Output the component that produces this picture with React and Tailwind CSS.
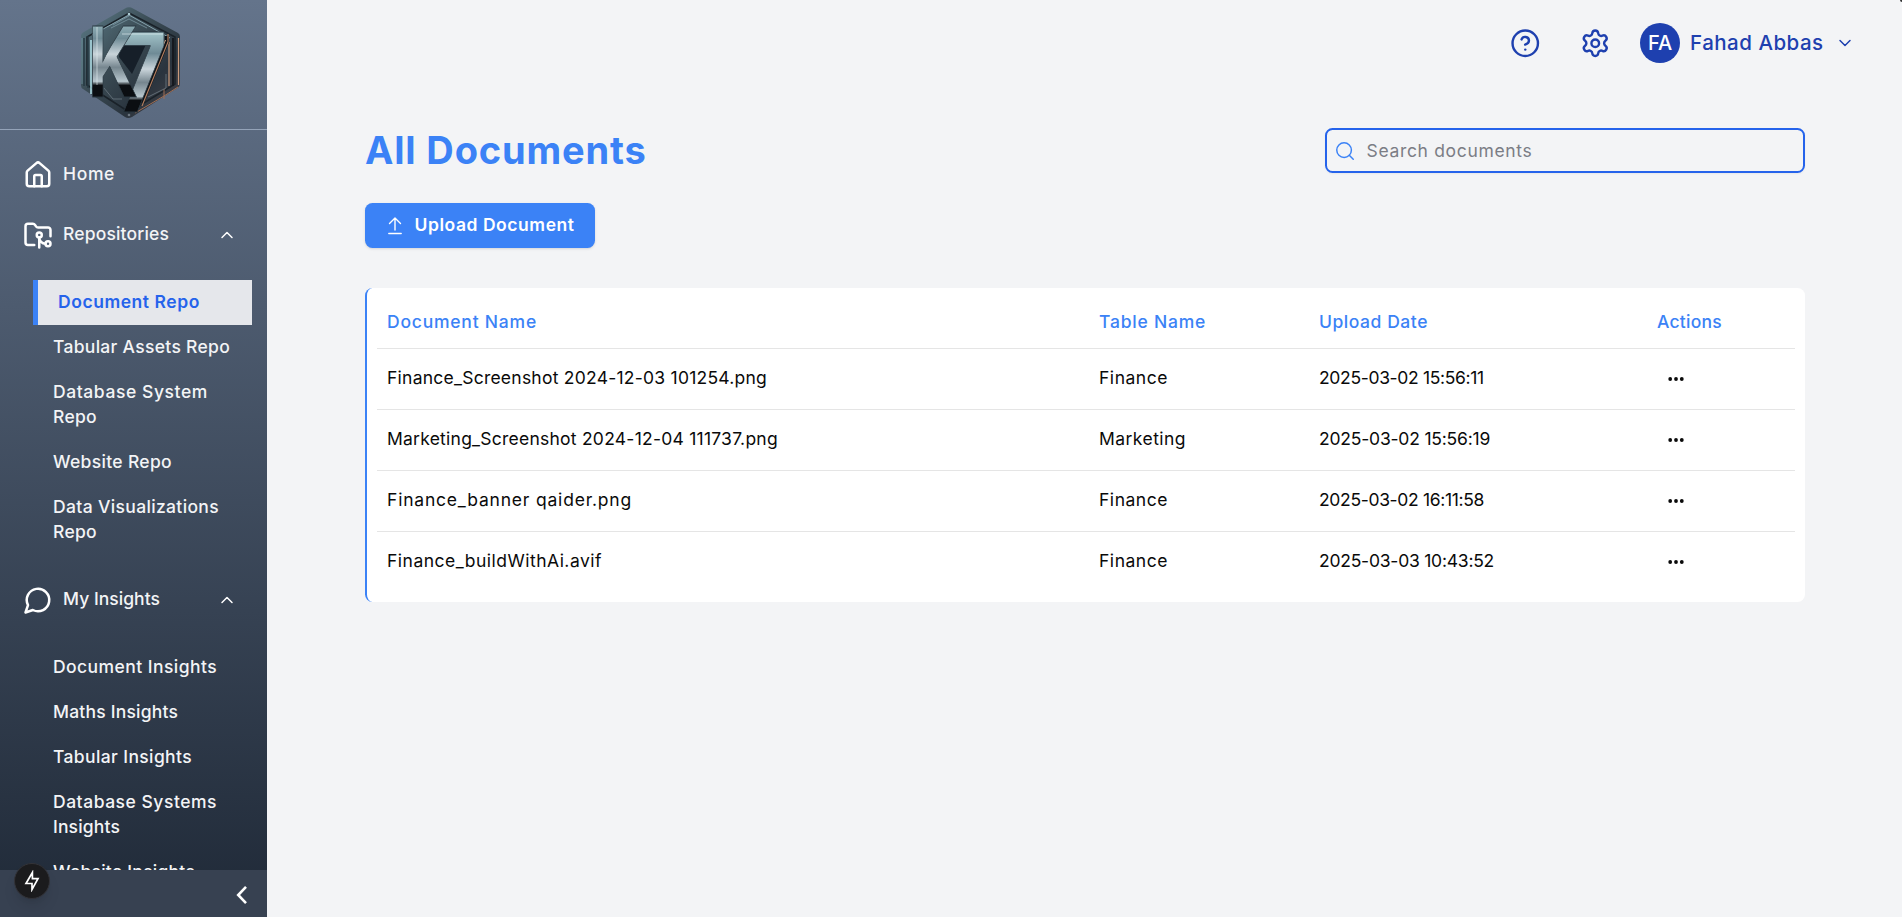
import React from "react";
import { ChevronUp, ChevronDown, House, FolderGit2, CircleHelp, Settings, Search } from "lucide-react";

const repoLinks = [
  [["Tabular Assets Repo", "tracking-[0.3px]"]],
  [["Database System", "tracking-[0.58px]"], ["Repo", "tracking-[0.3px]"]],
  [["Website Repo", "tracking-[0.32px]"]],
  [["Data Visualizations", "tracking-[0.35px]"], ["Repo", "tracking-[0.3px]"]],
];

const insightLinks = [
  [["Document Insights", "tracking-[0.44px]"]],
  [["Maths Insights", "tracking-[0.2px]"]],
  [["Tabular Insights", "tracking-[0.38px]"]],
  [["Database Systems", "tracking-[0.52px]"], ["Insights", "tracking-[0.16px]"]],
  [["Website Insights", "tracking-[0.25px]"]],
];

const rows = [
  {
    name: ["Finance_Screenshot 2024-12-03 101254.png", "tracking-[0.24px]"],
    table: ["Finance", "tracking-[0.53px]"],
    date: ["2025-03-02 15:56:11", "tracking-[-0.33px]"],
  },
  {
    name: ["Marketing_Screenshot 2024-12-04 111737.png", "tracking-[0.24px]"],
    table: ["Marketing", "tracking-[0.45px]"],
    date: ["2025-03-02 15:56:19", "tracking-[-0.2px]"],
  },
  {
    name: ["Finance_banner qaider.png", "tracking-[0.8px]"],
    table: ["Finance", "tracking-[0.53px]"],
    date: ["2025-03-02 16:11:58", "tracking-[-0.33px]"],
  },
  {
    name: ["Finance_buildWithAi.avif", "tracking-[0.49px]"],
    table: ["Finance", "tracking-[0.53px]"],
    date: ["2025-03-03 10:43:52", "tracking-[-0.23px]"],
  },
];

function Logo() {
  return (
    <svg width="106" height="120" viewBox="76 3 106 120" className="block overflow-visible">
      <defs>
        <linearGradient id="plate" x1="0" y1="0" x2="1" y2="1">
          <stop offset="0" stopColor="#5d7d89" />
          <stop offset="0.4" stopColor="#3b4c55" />
          <stop offset="0.7" stopColor="#2a343e" />
          <stop offset="1" stopColor="#4a4448" />
        </linearGradient>
        <linearGradient id="steel" x1="0" y1="-78" x2="0" y2="0" gradientUnits="userSpaceOnUse">
          <stop offset="0" stopColor="#9fc0c6" />
          <stop offset="0.25" stopColor="#6f8b96" />
          <stop offset="0.45" stopColor="#c9d4da" />
          <stop offset="0.62" stopColor="#76868f" />
          <stop offset="0.8" stopColor="#b7c6cd" />
          <stop offset="0.85" stopColor="#0b0e12" />
          <stop offset="1" stopColor="#0b0e12" />
        </linearGradient>
      </defs>
      <path d="M125 8.500q4-2.500 8 0L178 33q2 1 2 3.500V84q0 2-2 3.500L132 117q-4 2-7 0L83 89q-2-1-2-3.500V36q0-2.500 2-3.500Z" fill="url(#plate)" />
      <path d="M129 13 175 37V84L129 112 87 85V37Z" fill="none" stroke="#1a2229" strokeWidth="1.500" />
      <path d="M129 15 170 38M129 15 92 35" fill="none" stroke="#86a3ad" strokeWidth="1" />
      <path d="M111 28 129 19 147 28M113 25 129 16" fill="none" stroke="#7896a1" strokeWidth="0.800" />
      <path d="M84 38V86M88 36V88" stroke="#263a43" strokeWidth="1.500" />
      <path d="M91 40V94" stroke="#b4e4ec" strokeWidth="1.500" />
      <path d="M82 38V84" stroke="#7599a4" strokeWidth="0.800" />
      <path d="M169 42V86M178.500 38V85" stroke="#c99a7b" strokeWidth="1.200" />
      <path d="M173 38V86" stroke="#16191f" strokeWidth="2" />
      <path d="M164 89V99M135 113 164 96 178 87" fill="none" stroke="#a06f55" strokeWidth="1" />
      <path d="M104 88 113 99H122M148 97 166 88V74" fill="none" stroke="#65727b" strokeWidth="0.900" />
      <path d="M120 43 130 36H150L132 74 119 57Z" fill="#161f29" />
      <path d="M167 36V42L142 103" fill="none" stroke="#0d1116" strokeWidth="4" />
      <path d="M168 34V42L142 106" fill="none" stroke="#b07d5f" strokeWidth="1.200" />
      <path d="M165.500 40 139 104" fill="none" stroke="#d9b08f" strokeWidth="1" />
      <g fontFamily="Inter, sans-serif" fontWeight="700">
        <text transform="translate(116 112) scale(0.800 1)" fontSize="110" fill="url(#steel)" stroke="#2b3942" strokeWidth="0.800">7</text>
        <text transform="translate(88 97) scale(0.720 1)" fontSize="97" fill="url(#steel)" stroke="#2b3942" strokeWidth="0.800">K</text>
      </g>
      <path d="M97 27V85M122 34H163" fill="none" stroke="#e3eef1" strokeWidth="0.900" opacity="0.7" />
      <circle cx="129" cy="14" r="1.300" fill="#a9c9d0" />
      <circle cx="129" cy="115" r="1.300" fill="#6b7680" />
    </svg>
  );
}

function SubLink({ lines }) {
  return (
    <li className="pt-[9px] pb-[11px] pl-[20px]">
      {lines.map(([text, tracking]) => (
        <div key={text} className={"whitespace-nowrap leading-[25px] " + tracking}>
          {text}
        </div>
      ))}
    </li>
  );
}

function Sidebar() {
  return (
    <aside className="flex h-full w-[267px] shrink-0 flex-col bg-linear-to-b/srgb from-[#64748b] to-[#1f2937] text-[17.5px] font-medium text-gray-100">
      <div className="flex h-[130px] shrink-0 justify-center border-b border-[#94a3b8] pt-[3px] pr-[9px]">
        <Logo />
      </div>
      <nav className="min-h-0 flex-1 overflow-hidden pt-[22px]">
        <div className="flex h-[45px] items-center pl-[23px]">
          <House size={30} strokeWidth={2} className="text-white" />
          <span className="ml-[10px] tracking-[0.65px]">Home</span>
        </div>
        <div className="mt-[15px] flex h-[45px] items-center pr-[30px] pl-[23px]">
          <FolderGit2 size={30} strokeWidth={2} className="text-white" />
          <span className="ml-[10px] tracking-[0.16px]">Repositories</span>
          <ChevronUp size={20} strokeWidth={1.8} className="ml-auto text-white" />
        </div>
        <ul className="mt-[23px] pr-[15px] pl-[33px]">
          <li className="h-[45px] border-l-[5px] border-[#3b82f6] bg-[#e5e7eb] pl-[20px] leading-[43px] font-semibold tracking-[0.55px] text-[#2563eb]">
            Document Repo
          </li>
          {repoLinks.map((lines) => (
            <SubLink key={lines[0][0]} lines={lines} />
          ))}
        </ul>
        <div className="mt-[22px] flex h-[45px] items-center pr-[30px] pl-[23px]">
          <svg width="30" height="30" viewBox="0 0 24 24" fill="none" stroke="#fff" strokeWidth="2" strokeLinecap="round" strokeLinejoin="round">
            <path d="M7.9 20A9 9 0 1 0 4 16.1L2 22Z" />
          </svg>
          <span className="ml-[10px] tracking-[0.04px]">My Insights</span>
          <ChevronUp size={20} strokeWidth={1.8} className="ml-auto text-white" />
        </div>
        <ul className="mt-[23px] pl-[33px]">
          {insightLinks.map((lines) => (
            <SubLink key={lines[0][0]} lines={lines} />
          ))}
        </ul>
      </nav>
      <div className="flex h-[47px] shrink-0 items-center justify-end bg-[#374151] pt-[2px] pr-[18px]">
        <svg width="14" height="20" viewBox="0 0 14 20" fill="none" stroke="#fff" strokeWidth="2.6">
          <path d="M11 1.800 3.200 10 11 18.200" />
        </svg>
      </div>
    </aside>
  );
}

function Header() {
  return (
    <header className="flex h-[86px] items-center justify-end pr-[47px] text-[#1e40af]">
      <CircleHelp size={30.5} strokeWidth={1.9} />
      <Settings size={30.5} strokeWidth={1.9} className="ml-[39.5px]" />
      <div className="ml-[30px] flex size-[40px] items-center justify-center rounded-full bg-[#1e40af] text-[20px] font-medium text-white">
        FA
      </div>
      <span className="ml-[10px] w-[136px] whitespace-nowrap text-[20.5px] font-medium tracking-[0.5px]">Fahad Abbas</span>
      <ChevronDown size={20} strokeWidth={1.8} className="ml-[9px]" />
    </header>
  );
}

const columns = "grid grid-cols-[712px_220px_338px_1fr]";

function DocumentTable() {
  return (
    <section className="mt-[40px] rounded-[7.5px] border-l-2 border-[#3b82f6] bg-white p-[10px]">
      <div className={columns + " h-[51px] items-center border-b border-[#e5e5e5] pb-px font-medium text-[#3b82f6]"}>
        <div className="pl-[10px] tracking-[0.78px]">Document Name</div>
        <div className="pl-[10px] tracking-[0.78px]">Table Name</div>
        <div className="pl-[10px] tracking-[0.55px]">Upload Date</div>
        <div className="pl-[10px] tracking-[0.24px]">Actions</div>
      </div>
      {rows.map((row) => (
        <div
          key={row.name[0]}
          className={columns + " h-[61px] items-center border-b border-[#e5e5e5] pb-[2px] text-[#0a0a0a] last:h-[60px] last:border-b-0"}
        >
          <div className={"pl-[10px] whitespace-nowrap " + row.name[1]}>{row.name[0]}</div>
          <div className={"pl-[10px] whitespace-nowrap " + row.table[1]}>{row.table[0]}</div>
          <div className={"pl-[10px] whitespace-nowrap " + row.date[1]}>{row.date[0]}</div>
          <div className="pl-[21px]">
            <svg width="16" height="6" viewBox="0 0 16 6" fill="#0a0a0a" className="mt-[1px]">
              <circle cx="2.200" cy="3" r="1.900" />
              <circle cx="8" cy="3" r="1.900" />
              <circle cx="13.800" cy="3" r="1.900" />
            </svg>
          </div>
        </div>
      ))}
    </section>
  );
}

export default function App() {
  return (
    <div className="relative flex h-[917px] w-[1902px] overflow-hidden bg-[#f3f4f6] font-['Inter','Open_Sans',sans-serif] text-[17.5px]">
      <Sidebar />
      <main className="flex-1">
        <Header />
        <div className="pr-[97px] pl-[98px]">
          <div className="flex h-[87px] items-end justify-between">
            <h1 className="text-[38px] leading-[46px] font-bold tracking-[0.85px] text-[#3b82f6]">All Documents</h1>
            <div className="flex h-[45px] w-[480px] items-center rounded-[7.5px] border-2 border-[#2563eb] pl-[7px] shadow-xs">
              <Search size={22} strokeWidth={1.6} className="text-[#3b82f6]" />
              <span className="mt-[1px] ml-[10.5px] tracking-[0.67px] text-[#7b7d85]">Search documents</span>
            </div>
          </div>
          <button className="mt-[30px] flex h-[45px] w-[230px] items-center rounded-[7.5px] bg-[#3b82f6] pl-[23px] font-semibold text-white shadow-sm">
            <svg width="14" height="18" viewBox="0 0 14 18" fill="none" stroke="#fff" strokeWidth="1.4" strokeLinecap="round" strokeLinejoin="round" className="mt-[1px]">
              <path d="M7 13V1.500M1.500 6.500 7 1 12.500 6.500M0.800 16.500H13.200" />
            </svg>
            <span className="ml-[12.5px] tracking-[0.55px]">Upload Document</span>
          </button>
          <DocumentTable />
        </div>
      </main>
      <div className="absolute bottom-[18px] left-[14px] flex size-[36px] items-center justify-center rounded-full border border-[#333338] bg-[#1b1b1d] shadow-lg">
        <svg width="16" height="22" viewBox="0 0 16 22" fill="none" stroke="#fff" strokeWidth="1.7">
          <path d="M8.400 2.500V8.700H14L8 19.500V13.500H2Z" />
        </svg>
      </div>
      <div className="absolute top-0 right-0 size-[2px] rounded-bl-full bg-[#333]" />
    </div>
  );
}
